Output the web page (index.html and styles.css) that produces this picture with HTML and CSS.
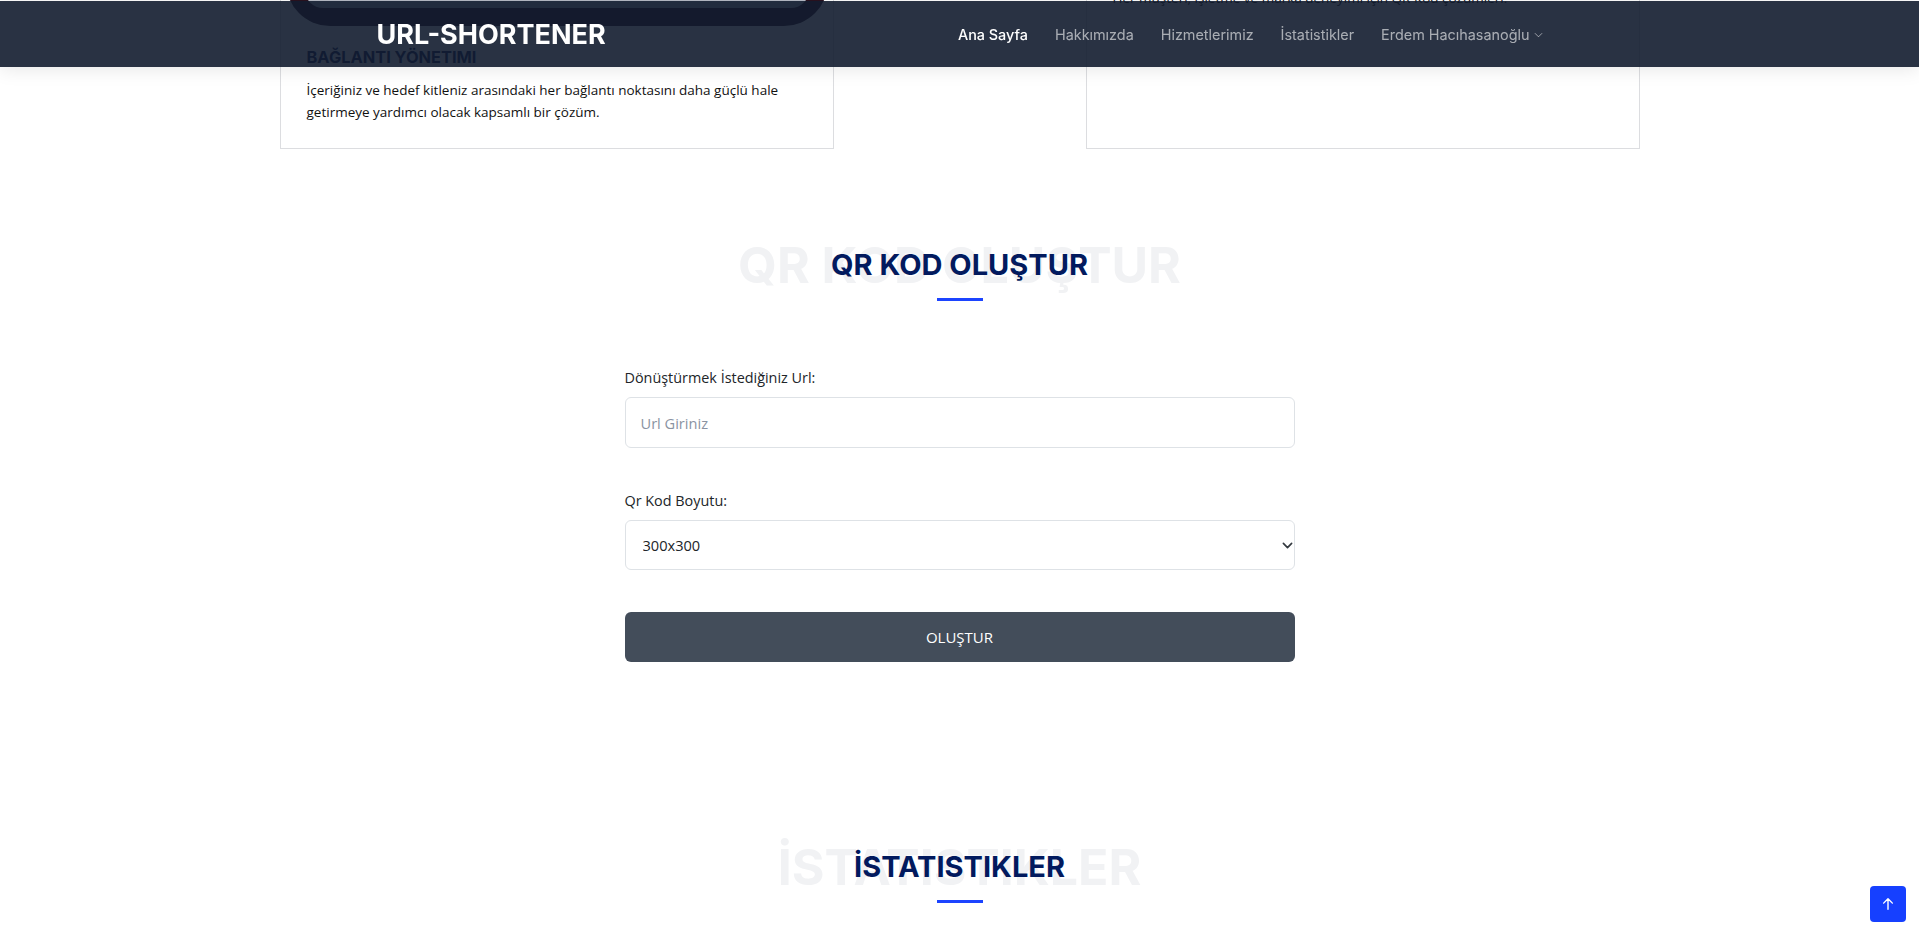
FILE: index.html
```html
<!DOCTYPE html>
<html lang="tr">
<head>
<meta charset="utf-8">
<title>URL-SHORTENER</title>
<link rel="stylesheet" href="styles.css">
</head>
<body>
<header class="topbar">
  <div class="topbar-inner">
    <a class="logo" href="#">URL-SHORTENER</a>
    <nav class="nav">
      <a class="nav-link active" href="#">Ana Sayfa</a>
      <a class="nav-link" href="#">Hakkımızda</a>
      <a class="nav-link" href="#">Hizmetlerimiz</a>
      <a class="nav-link" href="#">İstatistikler</a>
      <a class="nav-link dropdown" href="#">Erdem Hacıhasanoğlu
        <svg class="caret" viewBox="0 0 10 6" width="9" height="6"><path d="M1 1l4 4 4-4" fill="none" stroke="currentColor" stroke-width="1"/></svg>
      </a>
    </nav>
  </div>
</header>

<main class="page">
  <section class="features">
    <div class="feature-row">
      <article class="card">
        <div class="card-media tall">
          <div class="media-screen"></div>
        </div>
        <div class="card-body">
          <h4 class="card-title">BAĞLANTI YÖNETIMI</h4>
          <p class="card-text">İçeriğiniz ve hedef kitleniz arasındaki her bağlantı noktasını daha güçlü hale getirmeye yardımcı olacak kapsamlı bir çözüm.</p>
        </div>
      </article>
      <article class="card">
        <div class="card-media short light"></div>
        <div class="card-body">
          <h4 class="card-title">QR KODLAR</h4>
          <p class="card-text">Her müşteri, işletme ve marka deneyimi için QR Kod çözümleri.</p>
        </div>
      </article>
    </div>
  </section>

  <section class="qr-section">
    <div class="section-title">
      <span class="title-bg">QR KOD OLUŞTUR</span>
      <h2 class="title-main">QR KOD OLUŞTUR</h2>
      <span class="title-line"></span>
    </div>

    <form class="qr-form">
      <div class="field">
        <label class="field-label" for="url">Dönüştürmek İstediğiniz Url:</label>
        <input class="field-input" id="url" type="text" placeholder="Url Giriniz">
      </div>
      <div class="field">
        <label class="field-label" for="size">Qr Kod Boyutu:</label>
        <div class="select-wrap">
          <select class="field-select" id="size">
            <option>300x300</option>
            <option>200x200</option>
            <option>100x100</option>
          </select>
          <svg class="select-caret" viewBox="0 0 16 16" width="11" height="11"><path d="M2 5l6 6 6-6" fill="none" stroke="#343a40" stroke-width="2.4" stroke-linecap="round" stroke-linejoin="round"/></svg>
        </div>
      </div>
      <button class="submit-btn" type="button">OLUŞTUR</button>
    </form>
  </section>

  <section class="stats-section">
    <div class="section-title">
      <span class="title-bg">İSTATISTIKLER</span>
      <h2 class="title-main">İSTATISTIKLER</h2>
      <span class="title-line"></span>
    </div>
  </section>
</main>

<a class="back-top" href="#">
  <svg viewBox="0 0 16 16" width="14" height="14"><path d="M8 14V2M3 7l5-5 5 5" fill="none" stroke="#fff" stroke-width="1.6" stroke-linecap="round" stroke-linejoin="round"/></svg>
</a>
</body>
</html>
```

FILE: styles.css
```css
* { box-sizing: border-box; }
html, body {
  margin: 0;
  padding: 0;
  height: 935px;
  overflow: hidden;
  background: #fff;
}
body {
  font-family: "Open Sans", "Liberation Sans", sans-serif;
  color: #212529;
}
a { text-decoration: none; }

/* header */
.topbar {
  position: fixed;
  top: 1px;
  left: 0;
  right: 0;
  height: 66px;
  background: rgba(18, 28, 47, 0.9);
  box-shadow: 0 2px 18px rgba(0, 0, 0, 0.1);
  z-index: 10;
}
.topbar-inner {
  width: 1166px;
  height: 100%;
  margin: 0 auto;
  display: flex;
  align-items: center;
  justify-content: space-between;
}
.logo {
  font-family: Inter, "Liberation Sans", sans-serif;
  font-weight: 700;
  font-size: 27px;
  color: #fff;
}
.nav {
  display: flex;
  align-items: center;
  gap: 27px;
}
.nav-link {
  font-family: Inter, "Liberation Sans", sans-serif;
  font-size: 14.4px;
  font-weight: 400;
  color: rgba(255, 255, 255, 0.6);
  display: flex;
  align-items: center;
}
.nav-link.active {
  color: #fff;
  font-weight: 500;
}
.caret { margin-left: 4px; margin-top: 1px; }

/* feature cards (scrolled partly off screen) */
.features {
  margin-top: -280px;
}
.feature-row {
  width: 1360px;
  margin: 0 auto;
  display: flex;
  justify-content: space-between;
  align-items: stretch;
}
.card {
  width: 554px;
  border: 1px solid #dcdde0;
  background: #fff;
  padding: 5px 5px 0;
  display: flex;
  flex-direction: column;
}
.card-media {
  height: 300px;
  border-radius: 0 0 44px 44px;
  background: #2a1220;
  padding: 0 19px;
}
.card-media.short {
  height: 208px;
  background: #fff;
}
.media-screen {
  height: 282px;
  background: #b8bcc6;
  border-radius: 0 0 18px 18px;
}
.card-body {
  padding: 20px 21px 25px;
}
.card-title {
  margin: 0 0 11px;
  font-family: Inter, "Liberation Sans", sans-serif;
  font-weight: 700;
  font-size: 16.4px;
  line-height: 22px;
  color: #0b1a55;
}
.card-text {
  margin: 0;
  font-size: 13.5px;
  line-height: 22px;
  color: #111;
}

/* section titles */
.section-title {
  position: relative;
  text-align: center;
}
.title-bg {
  position: absolute;
  left: 0;
  right: 0;
  top: -5px;
  font-family: Inter, "Liberation Sans", sans-serif;
  font-weight: 700;
  font-size: 50px;
  line-height: 50px;
  color: #f1f2f4;
  white-space: nowrap;
}
.title-main {
  position: relative;
  margin: 0;
  font-family: Inter, "Liberation Sans", sans-serif;
  font-weight: 700;
  font-size: 29px;
  line-height: 40px;
  color: #021a5e;
}
.title-line {
  position: relative;
  display: block;
  width: 46px;
  height: 3px;
  background: #1c44ff;
  margin: 13px auto 0;
}

.qr-section {
  padding-top: 96px;
}

/* form */
.qr-form {
  width: 670px;
  margin: 66px auto 0;
}
.field { margin-bottom: 42px; }
.field-label {
  display: block;
  font-size: 14.4px;
  line-height: 22px;
  color: #212529;
  margin-bottom: 8px;
}
.field-input,
.field-select {
  display: block;
  width: 100%;
  font-family: "Open Sans", "Liberation Sans", sans-serif;
  font-size: 14.6px;
  color: #212529;
  background: #fff;
  border: 1px solid #dee2e6;
  border-radius: 6px;
  outline: none;
}
.field-input {
  height: 51px;
  padding: 0 15px;
}
.field-input::placeholder { color: #8a93a2; }
.select-wrap { position: relative; }
.field-select {
  height: 50px;
  padding: 0 17px;
  appearance: none;
  -webkit-appearance: none;
}
.select-caret {
  position: absolute;
  right: 2px;
  top: 20px;
}
.submit-btn {
  display: block;
  width: 100%;
  height: 50px;
  margin-top: 0;
  border: 0;
  border-radius: 6px;
  background: #434d5a;
  color: #fff;
  font-family: "Open Sans", "Liberation Sans", sans-serif;
  font-size: 15px;
}

.stats-section {
  padding-top: 185px;
}

/* back to top */
.back-top {
  position: fixed;
  right: 13px;
  bottom: 13px;
  width: 36px;
  height: 36px;
  border-radius: 4px;
  background: #1640ff;
  display: flex;
  align-items: center;
  justify-content: center;
  z-index: 20;
}
```
